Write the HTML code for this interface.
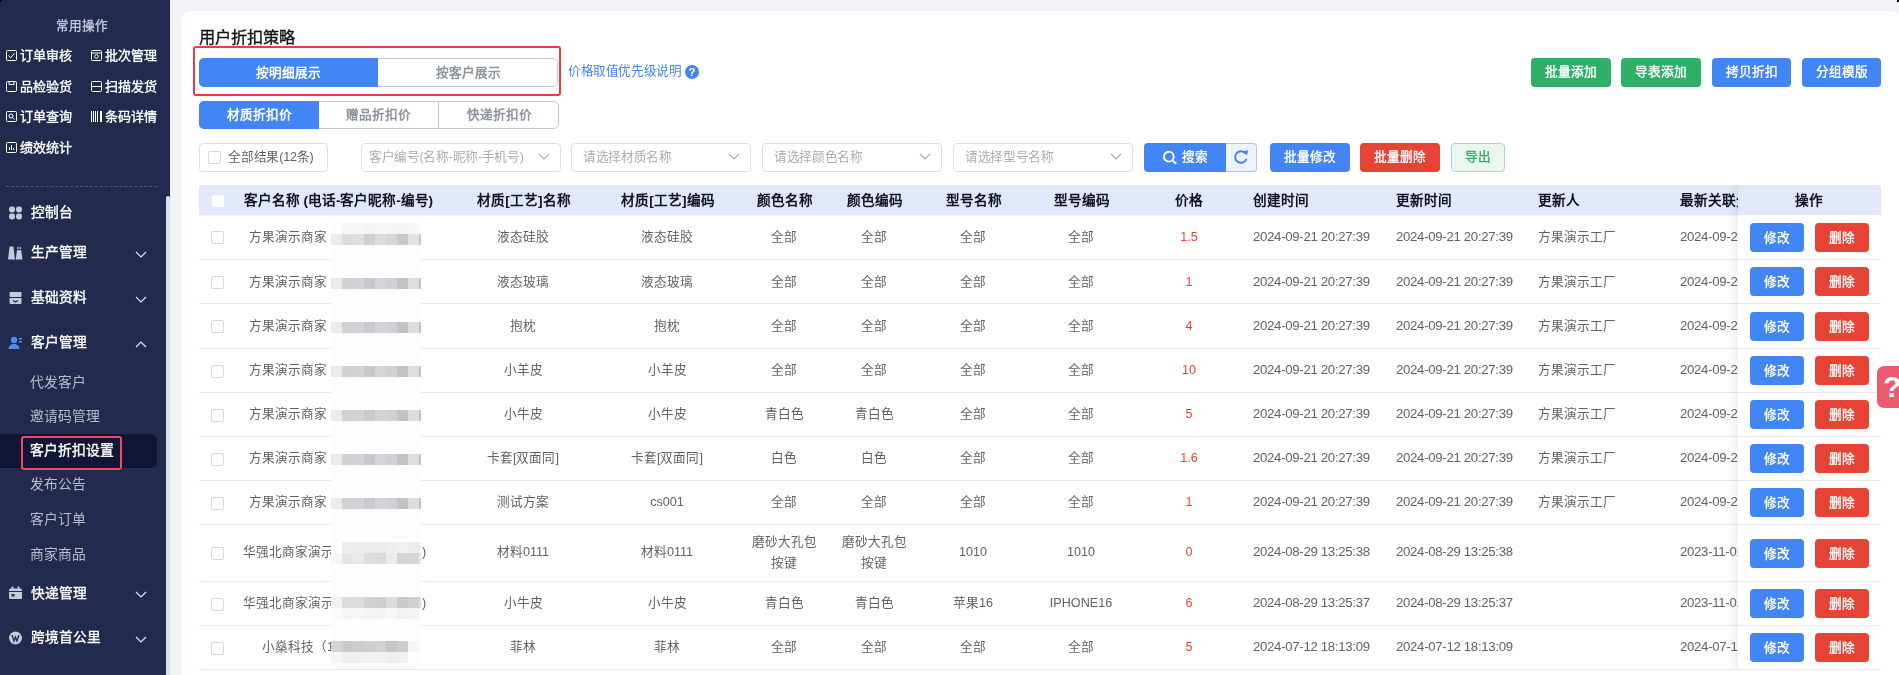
<!DOCTYPE html>
<html lang="zh-CN"><head><meta charset="utf-8"><title>用户折扣策略</title><style>
*{box-sizing:border-box;margin:0;padding:0}
html,body{width:1899px;height:675px;overflow:hidden;background:#f2f3f8}
body{font-family:"Liberation Sans",sans-serif;font-size:12.6px;color:#606266;position:relative}
.a{position:absolute;white-space:nowrap}
.t{position:absolute;white-space:nowrap;line-height:16px;height:16px}
.c{text-align:center}
#root{position:absolute;left:0;top:0;width:1899px;height:675px;overflow:hidden;will-change:transform}
#side{position:absolute;left:0;top:0;width:170px;height:675px;background:#222a4e;overflow:hidden}
#side .t{color:#fff;-webkit-text-stroke-width:.35px}
#card{position:absolute;left:181px;top:11px;width:1720px;height:680px;background:#fff;border-radius:10px}
.btn{position:absolute;height:29px;line-height:29px;text-align:center;color:#fff;border-radius:4px;font-size:12.6px;white-space:nowrap;-webkit-text-stroke-width:.35px}
.blue{background:#4285f4}.green{background:#2fb069}.red{background:#e64335}
.sel{position:absolute;top:143px;height:29px;border:1px solid #dcdfe6;border-radius:4px;background:#fff}
.sel span{position:absolute;top:0;line-height:27px;color:#a9acb3;white-space:nowrap;letter-spacing:-.35px}
.sel svg{position:absolute;right:10px;top:9px}
.cb{position:absolute;width:13px;height:13px;border:1px solid #d5d9e6;border-radius:2px;background:#fff}
.hd{position:absolute;white-space:nowrap;font-weight:bold;font-size:13.6px;letter-spacing:.1px;color:#111226;line-height:16px;top:193px}
.line{position:absolute;left:199px;width:1682px;height:1px;background:#e8eaf3}
.cell{position:absolute;white-space:nowrap;line-height:16px;color:#606266}
.price{color:#ea4335}
.ob{position:absolute;width:54px;height:29px;line-height:30px;border-radius:4px;color:#fff;text-align:center;-webkit-text-stroke-width:.35px}
</style></head><body>
<div id="root">
<div id="side">
<div class="t c" style="left:32px;width:100px;top:18px;color:#c3c8dc">常用操作</div>
<svg class="a" style="left:6px;top:49.5px" width="11" height="11" viewBox="0 0 11 11" fill="none" stroke="#fff" stroke-width="1"><rect x=".5" y=".5" width="10" height="10" rx="1"/><path d="M2.5 5.5 4.8 7.8 8.5 3.2"/></svg>
<div class="t" style="left:20px;top:47.6px;font-size:13px">订单审核</div>
<svg class="a" style="left:91px;top:49.5px" width="11" height="11" viewBox="0 0 11 11" fill="none" stroke="#fff" stroke-width="1"><rect x=".5" y=".5" width="10" height="10" rx="1"/><path d="M.5 3h10"/><circle cx="5.5" cy="6.5" r="1.8"/></svg>
<div class="t" style="left:105px;top:47.6px;font-size:13px">批次管理</div>
<svg class="a" style="left:6px;top:80.5px" width="11" height="11" viewBox="0 0 11 11" fill="none" stroke="#fff" stroke-width="1"><rect x=".5" y=".5" width="10" height="10" rx="1"/><path d="M3 .5v3h5v-3"/></svg>
<div class="t" style="left:20px;top:78.6px;font-size:13px">品检验货</div>
<svg class="a" style="left:91px;top:80.5px" width="11" height="11" viewBox="0 0 11 11" fill="none" stroke="#fff" stroke-width="1"><rect x=".5" y=".5" width="10" height="10" rx="1"/><path d="M.5 5.5h10"/></svg>
<div class="t" style="left:105px;top:78.6px;font-size:13px">扫描发货</div>
<svg class="a" style="left:6px;top:110.5px" width="11" height="11" viewBox="0 0 11 11" fill="none" stroke="#fff" stroke-width="1"><rect x=".5" y=".5" width="10" height="10" rx="1"/><circle cx="5" cy="5" r="2"/><path d="M6.5 6.5 8.5 8.5"/></svg>
<div class="t" style="left:20px;top:108.6px;font-size:13px">订单查询</div>
<svg class="a" style="left:91px;top:110.5px" width="11" height="11" viewBox="0 0 11 11" fill="none" stroke="#fff" stroke-width="1"><g fill="#fff" stroke="none" shape-rendering="crispEdges"><rect x="0" y="0" width="1" height="11"/><rect x="2" y="0" width="1" height="11"/><rect x="4" y="0" width="1" height="11"/><rect x="6" y="0" width="1" height="11"/><rect x="9" y="0" width="2" height="11"/></g></svg>
<div class="t" style="left:105px;top:108.6px;font-size:13px">条码详情</div>
<svg class="a" style="left:6px;top:141.5px" width="11" height="11" viewBox="0 0 11 11" fill="none" stroke="#fff" stroke-width="1"><rect x=".5" y=".5" width="10" height="10" rx="1"/><path d="M3.5 8V5M5.5 8V3M7.5 8V6"/></svg>
<div class="t" style="left:20px;top:139.6px;font-size:13px">绩效统计</div>
<div class="a" style="left:6px;top:186px;width:151px;height:0;border-top:1px dashed #4c557c"></div>
<div class="a" style="left:0;top:434px;width:157px;height:34px;background:#121636;border-radius:0 6px 6px 0"></div>
<div class="a" style="left:21px;top:436px;width:101px;height:34px;border:2px solid #f04b5c;border-radius:3px"></div>
<svg class="a" style="left:8px;top:205.5px" width="15" height="14" viewBox="0 0 15 14"><g fill="#c6cad9"><rect x="1" y="0.5" width="6" height="6" rx="2.4"/><rect x="8" y="0.5" width="6" height="6" rx="2.4"/><rect x="1" y="7.5" width="6" height="6" rx="2.4"/><rect x="8" y="7.5" width="6" height="6" rx="2.4"/></g></svg>
<div class="t" style="left:31px;top:205px;font-size:13.7px">控制台</div>
<svg class="a" style="left:8px;top:245.7px" width="15" height="14" viewBox="0 0 15 14"><g fill="#c6cad9"><path d="M0 13.500 1.600 0.500h3.800L7 13.500z"/><path d="M7.700 13.500 9 4.300h4.200l1.300 9.200z"/><rect x="9.300" y="0.800" width="1.200" height="2.400"/><rect x="11.600" y="0.800" width="1.200" height="2.400"/></g></svg>
<div class="t" style="left:31px;top:245.2px;font-size:13.7px">生产管理</div>
<svg class="a" style="left:135px;top:250.7px" width="12" height="7" viewBox="0 0 12 7" fill="none" stroke="#e4e7f2" stroke-width="1.2"><path d="M1 1 6 6 11 1"/></svg>
<svg class="a" style="left:8px;top:290.9px" width="15" height="14" viewBox="0 0 15 14"><g fill="#c6cad9"><rect x="1.5" y="1" width="12" height="5" rx="1"/><path d="M1.5 7h12v5a1 1 0 0 1-1 1h-10a1 1 0 0 1-1-1z"/></g><path d="M5 9.5 7.5 11 10 9.5" stroke="#222a4e" stroke-width="1.3" fill="none"/></svg>
<div class="t" style="left:31px;top:290.4px;font-size:13.7px">基础资料</div>
<svg class="a" style="left:135px;top:295.9px" width="12" height="7" viewBox="0 0 12 7" fill="none" stroke="#e4e7f2" stroke-width="1.2"><path d="M1 1 6 6 11 1"/></svg>
<svg class="a" style="left:8px;top:335.7px" width="15" height="14" viewBox="0 0 15 14"><g fill="#4d8af5"><circle cx="6" cy="4" r="3.2"/><path d="M0.5 13c0-3.4 2.4-5 5.5-5s5.5 1.6 5.500 5z"/><rect x="11" y="2" width="3" height="1.6"/><rect x="11" y="5" width="3" height="1.6"/></g></svg>
<div class="t" style="left:31px;top:335.2px;font-size:13.7px">客户管理</div>
<svg class="a" style="left:135px;top:340.7px" width="12" height="7" viewBox="0 0 12 7" fill="none" stroke="#e4e7f2" stroke-width="1.2"><path d="M1 6 6 1 11 6"/></svg>
<svg class="a" style="left:8px;top:586px" width="15" height="14" viewBox="0 0 15 14"><g fill="#c6cad9"><rect x="1" y="2.5" width="13" height="10.500" rx="1.5"/><rect x="3.5" y="0.5" width="2" height="3" rx=".6"/><rect x="9.5" y="0.5" width="2" height="3" rx=".6"/></g><rect x="1" y="5" width="13" height="1" fill="#222a4e"/><rect x="3.5" y="8" width="3" height="2.500" fill="#222a4e"/></svg>
<div class="t" style="left:31px;top:585.5px;font-size:13.7px">快递管理</div>
<svg class="a" style="left:135px;top:591px" width="12" height="7" viewBox="0 0 12 7" fill="none" stroke="#e4e7f2" stroke-width="1.2"><path d="M1 1 6 6 11 1"/></svg>
<svg class="a" style="left:8px;top:630.5px" width="15" height="14" viewBox="0 0 15 14"><circle cx="7.5" cy="7" r="6.5" fill="#c6cad9"/><path d="M4 4l2 6 1.500-4 1.500 4 2-6" stroke="#222a4e" stroke-width="1.300" fill="none"/></svg>
<div class="t" style="left:31px;top:630px;font-size:13.7px">跨境首公里</div>
<svg class="a" style="left:135px;top:635.5px" width="12" height="7" viewBox="0 0 12 7" fill="none" stroke="#e4e7f2" stroke-width="1.2"><path d="M1 1 6 6 11 1"/></svg>
<div class="t" style="left:30px;top:375px;font-size:13.8px;color:#b9bdcc;-webkit-text-stroke-width:0">代发客户</div>
<div class="t" style="left:30px;top:409px;font-size:13.8px;color:#b9bdcc;-webkit-text-stroke-width:0">邀请码管理</div>
<div class="t" style="left:30px;top:443.4px;font-size:13.8px;color:#fff;-webkit-text-stroke-width:.35px">客户折扣设置</div>
<div class="t" style="left:30px;top:477.4px;font-size:13.8px;color:#b9bdcc;-webkit-text-stroke-width:0">发布公告</div>
<div class="t" style="left:30px;top:512.1px;font-size:13.8px;color:#b9bdcc;-webkit-text-stroke-width:0">客户订单</div>
<div class="t" style="left:30px;top:546.7px;font-size:13.8px;color:#b9bdcc;-webkit-text-stroke-width:0">商家商品</div>
<div class="a" style="left:166px;top:196px;width:4px;height:490px;background:#dcdfeb;border-radius:2px 2px 0 0"></div>
</div>
<div id="card"></div>
<div class="a" style="left:199px;top:27px;font-size:16.2px;line-height:20px;color:#111;-webkit-text-stroke-width:.35px">用户折扣策略</div>
<div class="a" style="left:193px;top:46px;width:368px;height:50px;border:2px solid #f4364c;border-radius:3px"></div>
<div class="a" style="left:199px;top:58px;width:359px;height:29px;border:1px solid #c6c8cc;border-radius:5px;background:#fff"></div>
<div class="a c" style="left:199px;top:58px;width:179px;height:29px;line-height:31px;background:#4285f4;color:#fff;font-weight:bold;border-radius:5px 0 0 5px">按明细展示</div>
<div class="a c" style="left:378px;top:58px;width:180px;height:29px;line-height:31px;color:#8e93a0;font-weight:bold">按客户展示</div>
<div class="a" style="left:568px;top:63px;line-height:16px;color:#4285f4;letter-spacing:-.4px">价格取值优先级说明</div>
<svg class="a" style="left:685px;top:64.5px" width="14" height="14" viewBox="0 0 13 13"><circle cx="6.5" cy="6.5" r="6.5" fill="#4285f4"/><text x="6.5" y="10.200" font-size="10.500" font-weight="bold" text-anchor="middle" fill="#fff" font-family="Liberation Sans, sans-serif">?</text></svg>
<div class="a" style="left:199px;top:101px;width:360px;height:28px;border:1px solid #c6c8cc;border-radius:5px;background:#fff"></div>
<div class="a c" style="left:199px;top:101px;width:120px;height:28px;line-height:28px;background:#4285f4;color:#fff;font-weight:bold;border-radius:5px 0 0 5px">材质折扣价</div>
<div class="a c" style="left:319px;top:101px;width:120px;height:28px;line-height:26px;color:#8e93a0;font-weight:bold;border-right:1px solid #c6c8cc;border-top:1px solid #c6c8cc;border-bottom:1px solid #c6c8cc">赠品折扣价</div>
<div class="a c" style="left:439px;top:101px;width:120px;height:28px;line-height:28px;color:#8e93a0;font-weight:bold">快递折扣价</div>
<div class="btn green" style="left:1531px;top:58px;width:80px">批量添加</div>
<div class="btn green" style="left:1621px;top:58px;width:80px">导表添加</div>
<div class="btn blue" style="left:1712px;top:58px;width:79px">拷贝折扣</div>
<div class="btn blue" style="left:1802px;top:58px;width:79px">分组模版</div>
<div class="a" style="left:199px;top:143px;width:129px;height:29px;border:1px solid #dcdfe6;border-radius:4px"></div>
<div class="cb" style="left:208px;top:151px"></div>
<div class="a" style="left:228px;top:143px;line-height:28px;color:#606266;letter-spacing:-.2px">全部结果(12条)</div>
<div class="sel" style="left:361px;width:200px"><span style="left:7px">客户编号(名称-昵称-手机号)</span><svg width="12" height="7" viewBox="0 0 12 7" fill="none" stroke="#a8abb2" stroke-width="1.100"><path d="M1 1 6 6 11 1"/></svg></div>
<div class="sel" style="left:571px;width:180px"><span style="left:11px">请选择材质名称</span><svg width="12" height="7" viewBox="0 0 12 7" fill="none" stroke="#a8abb2" stroke-width="1.100"><path d="M1 1 6 6 11 1"/></svg></div>
<div class="sel" style="left:762px;width:180px"><span style="left:11px">请选择颜色名称</span><svg width="12" height="7" viewBox="0 0 12 7" fill="none" stroke="#a8abb2" stroke-width="1.100"><path d="M1 1 6 6 11 1"/></svg></div>
<div class="sel" style="left:953px;width:180px"><span style="left:11px">请选择型号名称</span><svg width="12" height="7" viewBox="0 0 12 7" fill="none" stroke="#a8abb2" stroke-width="1.100"><path d="M1 1 6 6 11 1"/></svg></div>
<div class="btn blue" style="left:1144px;top:143px;width:82px;border-radius:4px 0 0 4px"></div>
<svg class="a" style="left:1162px;top:149.500px" width="16" height="16" viewBox="0 0 16 16" fill="none" stroke="#fff" stroke-width="1.900" stroke-linecap="round"><circle cx="6.800" cy="6.700" r="4.900"/><path d="M10.500 10.400 13.600 13.300"/></svg>
<div class="a" style="left:1182px;top:143px;line-height:29px;color:#fff;-webkit-text-stroke-width:.35px">搜索</div>
<div class="a" style="left:1226px;top:143px;width:31px;height:29px;background:#ecf3fe;border:1px solid #a9c6fa;border-left:none;border-radius:0 4px 4px 0"></div>
<svg class="a" style="left:1232.800px;top:149.100px" width="16" height="16" viewBox="0 0 16 16"><path d="M12.440 4.270A5.800 5.800 0 1 0 13.260 10.450" fill="none" stroke="#4285f4" stroke-width="1.900" stroke-linecap="round"/><path d="M10.300 2.600 14.900 1 14.400 5.900z" fill="#4285f4"/></svg>
<div class="btn blue" style="left:1270px;top:143px;width:80px">批量修改</div>
<div class="btn red" style="left:1360px;top:143px;width:80px">批量删除</div>
<div class="btn" style="left:1451px;top:143px;width:54px;background:#eaf7f0;border:1px solid #a5dbbb;color:#2fb069;line-height:27px">导出</div>
<div class="a" style="left:199px;top:185px;width:1682px;height:30px;background:#e3e8f8;border-radius:4px 4px 0 0"></div>
<div class="a" style="left:199px;top:215px;width:1682px;height:1px;background:#f4f6fc"></div>
<div class="a" style="left:1897px;top:0;width:2px;height:2px;background:#000"></div>
<div class="a" style="left:0;top:0;width:2px;height:2px;background:#000"></div>
<div class="cb" style="left:212px;top:195px;width:12px;height:12px;border-color:#fff"></div>
<div class="hd" style="left:244px;letter-spacing:-.05px">客户名称 (电话-客户昵称-编号)</div>
<div class="hd" style="left:477px">材质[工艺]名称</div>
<div class="hd" style="left:621px">材质[工艺]编码</div>
<div class="hd" style="left:757px">颜色名称</div>
<div class="hd" style="left:847px">颜色编码</div>
<div class="hd" style="left:946px">型号名称</div>
<div class="hd" style="left:1054px">型号编码</div>
<div class="hd" style="left:1175px">价格</div>
<div class="hd" style="left:1253px">创建时间</div>
<div class="hd" style="left:1396px">更新时间</div>
<div class="hd" style="left:1538px">更新人</div>
<div class="hd" style="left:1680px">最新关联分组时间</div>
<div class="line" style="top:259px"></div>
<div class="line" style="top:303px"></div>
<div class="line" style="top:348px"></div>
<div class="line" style="top:392px"></div>
<div class="line" style="top:436px"></div>
<div class="line" style="top:480px"></div>
<div class="line" style="top:524px"></div>
<div class="line" style="top:581px"></div>
<div class="line" style="top:625px"></div>
<div class="line" style="top:669px"></div>
<div class="cb" style="left:211px;top:231px"></div>
<div class="cell" style="left:249px;top:229px">方果演示商家</div>
<div class="cell c" style="left:453px;width:140px;top:229px">液态硅胶</div>
<div class="cell c" style="left:597px;width:140px;top:229px">液态硅胶</div>
<div class="cell c" style="left:714px;width:140px;top:229px">全部</div>
<div class="cell c" style="left:804px;width:140px;top:229px">全部</div>
<div class="cell c" style="left:903px;width:140px;top:229px">全部</div>
<div class="cell c" style="left:1011px;width:140px;top:229px">全部</div>
<div class="cell c price" style="left:1119px;width:140px;top:229px">1.5</div>
<div class="cell" style="left:1253px;top:229px;font-size:13.2px;letter-spacing:-.3px">2024-09-21 20:27:39</div>
<div class="cell" style="left:1396px;top:229px;font-size:13.2px;letter-spacing:-.3px">2024-09-21 20:27:39</div>
<div class="cell" style="left:1538px;top:229px">方果演示工厂</div>
<div class="cell" style="left:1680px;top:229px;font-size:13.2px;letter-spacing:-.3px">2024-09-21</div>
<div class="cb" style="left:211px;top:276px"></div>
<div class="cell" style="left:249px;top:274px">方果演示商家</div>
<div class="cell c" style="left:453px;width:140px;top:274px">液态玻璃</div>
<div class="cell c" style="left:597px;width:140px;top:274px">液态玻璃</div>
<div class="cell c" style="left:714px;width:140px;top:274px">全部</div>
<div class="cell c" style="left:804px;width:140px;top:274px">全部</div>
<div class="cell c" style="left:903px;width:140px;top:274px">全部</div>
<div class="cell c" style="left:1011px;width:140px;top:274px">全部</div>
<div class="cell c price" style="left:1119px;width:140px;top:274px">1</div>
<div class="cell" style="left:1253px;top:274px;font-size:13.2px;letter-spacing:-.3px">2024-09-21 20:27:39</div>
<div class="cell" style="left:1396px;top:274px;font-size:13.2px;letter-spacing:-.3px">2024-09-21 20:27:39</div>
<div class="cell" style="left:1538px;top:274px">方果演示工厂</div>
<div class="cell" style="left:1680px;top:274px;font-size:13.2px;letter-spacing:-.3px">2024-09-21</div>
<div class="cb" style="left:211px;top:320px"></div>
<div class="cell" style="left:249px;top:318px">方果演示商家</div>
<div class="cell c" style="left:453px;width:140px;top:318px">抱枕</div>
<div class="cell c" style="left:597px;width:140px;top:318px">抱枕</div>
<div class="cell c" style="left:714px;width:140px;top:318px">全部</div>
<div class="cell c" style="left:804px;width:140px;top:318px">全部</div>
<div class="cell c" style="left:903px;width:140px;top:318px">全部</div>
<div class="cell c" style="left:1011px;width:140px;top:318px">全部</div>
<div class="cell c price" style="left:1119px;width:140px;top:318px">4</div>
<div class="cell" style="left:1253px;top:318px;font-size:13.2px;letter-spacing:-.3px">2024-09-21 20:27:39</div>
<div class="cell" style="left:1396px;top:318px;font-size:13.2px;letter-spacing:-.3px">2024-09-21 20:27:39</div>
<div class="cell" style="left:1538px;top:318px">方果演示工厂</div>
<div class="cell" style="left:1680px;top:318px;font-size:13.2px;letter-spacing:-.3px">2024-09-21</div>
<div class="cb" style="left:211px;top:365px"></div>
<div class="cell" style="left:249px;top:362px">方果演示商家</div>
<div class="cell c" style="left:453px;width:140px;top:362px">小羊皮</div>
<div class="cell c" style="left:597px;width:140px;top:362px">小羊皮</div>
<div class="cell c" style="left:714px;width:140px;top:362px">全部</div>
<div class="cell c" style="left:804px;width:140px;top:362px">全部</div>
<div class="cell c" style="left:903px;width:140px;top:362px">全部</div>
<div class="cell c" style="left:1011px;width:140px;top:362px">全部</div>
<div class="cell c price" style="left:1119px;width:140px;top:362px">10</div>
<div class="cell" style="left:1253px;top:362px;font-size:13.2px;letter-spacing:-.3px">2024-09-21 20:27:39</div>
<div class="cell" style="left:1396px;top:362px;font-size:13.2px;letter-spacing:-.3px">2024-09-21 20:27:39</div>
<div class="cell" style="left:1538px;top:362px">方果演示工厂</div>
<div class="cell" style="left:1680px;top:362px;font-size:13.2px;letter-spacing:-.3px">2024-09-21</div>
<div class="cb" style="left:211px;top:409px"></div>
<div class="cell" style="left:249px;top:406px">方果演示商家</div>
<div class="cell c" style="left:453px;width:140px;top:406px">小牛皮</div>
<div class="cell c" style="left:597px;width:140px;top:406px">小牛皮</div>
<div class="cell c" style="left:714px;width:140px;top:406px">青白色</div>
<div class="cell c" style="left:804px;width:140px;top:406px">青白色</div>
<div class="cell c" style="left:903px;width:140px;top:406px">全部</div>
<div class="cell c" style="left:1011px;width:140px;top:406px">全部</div>
<div class="cell c price" style="left:1119px;width:140px;top:406px">5</div>
<div class="cell" style="left:1253px;top:406px;font-size:13.2px;letter-spacing:-.3px">2024-09-21 20:27:39</div>
<div class="cell" style="left:1396px;top:406px;font-size:13.2px;letter-spacing:-.3px">2024-09-21 20:27:39</div>
<div class="cell" style="left:1538px;top:406px">方果演示工厂</div>
<div class="cell" style="left:1680px;top:406px;font-size:13.2px;letter-spacing:-.3px">2024-09-21</div>
<div class="cb" style="left:211px;top:453px"></div>
<div class="cell" style="left:249px;top:450px">方果演示商家</div>
<div class="cell c" style="left:453px;width:140px;top:450px">卡套[双面同]</div>
<div class="cell c" style="left:597px;width:140px;top:450px">卡套[双面同]</div>
<div class="cell c" style="left:714px;width:140px;top:450px">白色</div>
<div class="cell c" style="left:804px;width:140px;top:450px">白色</div>
<div class="cell c" style="left:903px;width:140px;top:450px">全部</div>
<div class="cell c" style="left:1011px;width:140px;top:450px">全部</div>
<div class="cell c price" style="left:1119px;width:140px;top:450px">1.6</div>
<div class="cell" style="left:1253px;top:450px;font-size:13.2px;letter-spacing:-.3px">2024-09-21 20:27:39</div>
<div class="cell" style="left:1396px;top:450px;font-size:13.2px;letter-spacing:-.3px">2024-09-21 20:27:39</div>
<div class="cell" style="left:1538px;top:450px">方果演示工厂</div>
<div class="cell" style="left:1680px;top:450px;font-size:13.2px;letter-spacing:-.3px">2024-09-21</div>
<div class="cb" style="left:211px;top:497px"></div>
<div class="cell" style="left:249px;top:494px">方果演示商家</div>
<div class="cell c" style="left:453px;width:140px;top:494px">测试方案</div>
<div class="cell c" style="left:597px;width:140px;top:494px">cs001</div>
<div class="cell c" style="left:714px;width:140px;top:494px">全部</div>
<div class="cell c" style="left:804px;width:140px;top:494px">全部</div>
<div class="cell c" style="left:903px;width:140px;top:494px">全部</div>
<div class="cell c" style="left:1011px;width:140px;top:494px">全部</div>
<div class="cell c price" style="left:1119px;width:140px;top:494px">1</div>
<div class="cell" style="left:1253px;top:494px;font-size:13.2px;letter-spacing:-.3px">2024-09-21 20:27:39</div>
<div class="cell" style="left:1396px;top:494px;font-size:13.2px;letter-spacing:-.3px">2024-09-21 20:27:39</div>
<div class="cell" style="left:1538px;top:494px">方果演示工厂</div>
<div class="cell" style="left:1680px;top:494px;font-size:13.2px;letter-spacing:-.3px">2024-09-21</div>
<div class="cb" style="left:211px;top:547px"></div>
<div class="cell" style="left:243px;top:544px">华强北商家演示</div>
<div class="cell c" style="left:453px;width:140px;top:544px">材料0111</div>
<div class="cell c" style="left:597px;width:140px;top:544px">材料0111</div>
<div class="cell c" style="left:714px;width:140px;top:532px;line-height:20.7px">磨砂大孔包<br>按键</div>
<div class="cell c" style="left:804px;width:140px;top:532px;line-height:20.7px">磨砂大孔包<br>按键</div>
<div class="cell c" style="left:903px;width:140px;top:544px">1010</div>
<div class="cell c" style="left:1011px;width:140px;top:544px">1010</div>
<div class="cell c price" style="left:1119px;width:140px;top:544px">0</div>
<div class="cell" style="left:1253px;top:544px;font-size:13.2px;letter-spacing:-.3px">2024-08-29 13:25:38</div>
<div class="cell" style="left:1396px;top:544px;font-size:13.2px;letter-spacing:-.3px">2024-08-29 13:25:38</div>
<div class="cell" style="left:1680px;top:544px;font-size:13.2px;letter-spacing:-.3px">2023-11-01</div>
<div class="cb" style="left:211px;top:598px"></div>
<div class="cell" style="left:243px;top:595px">华强北商家演示</div>
<div class="cell c" style="left:453px;width:140px;top:595px">小牛皮</div>
<div class="cell c" style="left:597px;width:140px;top:595px">小牛皮</div>
<div class="cell c" style="left:714px;width:140px;top:595px">青白色</div>
<div class="cell c" style="left:804px;width:140px;top:595px">青白色</div>
<div class="cell c" style="left:903px;width:140px;top:595px">苹果16</div>
<div class="cell c" style="left:1011px;width:140px;top:595px">IPHONE16</div>
<div class="cell c price" style="left:1119px;width:140px;top:595px">6</div>
<div class="cell" style="left:1253px;top:595px;font-size:13.2px;letter-spacing:-.3px">2024-08-29 13:25:37</div>
<div class="cell" style="left:1396px;top:595px;font-size:13.2px;letter-spacing:-.3px">2024-08-29 13:25:37</div>
<div class="cell" style="left:1680px;top:595px;font-size:13.2px;letter-spacing:-.3px">2023-11-01</div>
<div class="cb" style="left:211px;top:642px"></div>
<div class="cell" style="left:262px;top:639px">小燊科技（1</div>
<div class="cell c" style="left:453px;width:140px;top:639px">菲林</div>
<div class="cell c" style="left:597px;width:140px;top:639px">菲林</div>
<div class="cell c" style="left:714px;width:140px;top:639px">全部</div>
<div class="cell c" style="left:804px;width:140px;top:639px">全部</div>
<div class="cell c" style="left:903px;width:140px;top:639px">全部</div>
<div class="cell c" style="left:1011px;width:140px;top:639px">全部</div>
<div class="cell c price" style="left:1119px;width:140px;top:639px">5</div>
<div class="cell" style="left:1253px;top:639px;font-size:13.2px;letter-spacing:-.3px">2024-07-12 18:13:09</div>
<div class="cell" style="left:1396px;top:639px;font-size:13.2px;letter-spacing:-.3px">2024-07-12 18:13:09</div>
<div class="cell" style="left:1680px;top:639px;font-size:13.2px;letter-spacing:-.3px">2024-07-12</div>
<div class="a" style="left:331px;top:222px;width:90px;height:443px;background:#fdfdfd"></div>
<div class="a" style="left:342px;top:222.7px;width:11px;height:11px;background:#f6f6f6"></div>
<div class="a" style="left:353px;top:222.7px;width:11px;height:11px;background:#f7f7f7"></div>
<div class="a" style="left:364px;top:222.7px;width:11px;height:11px;background:#f5f5f5"></div>
<div class="a" style="left:375px;top:222.7px;width:11px;height:11px;background:#f7f7f7"></div>
<div class="a" style="left:386px;top:222.7px;width:11px;height:11px;background:#f6f6f6"></div>
<div class="a" style="left:397px;top:222.7px;width:11px;height:11px;background:#f5f5f5"></div>
<div class="a" style="left:408px;top:222.7px;width:11px;height:11px;background:#f7f7f7"></div>
<div class="a" style="left:331px;top:233.7px;width:11px;height:11px;background:#ebebeb"></div>
<div class="a" style="left:342px;top:233.7px;width:11px;height:11px;background:#dcdcde"></div>
<div class="a" style="left:353px;top:233.7px;width:11px;height:11px;background:#dedfe0"></div>
<div class="a" style="left:364px;top:233.7px;width:11px;height:11px;background:#cfd0d3"></div>
<div class="a" style="left:375px;top:233.7px;width:11px;height:11px;background:#dcdddf"></div>
<div class="a" style="left:386px;top:233.7px;width:11px;height:11px;background:#d6d7d9"></div>
<div class="a" style="left:397px;top:233.7px;width:11px;height:11px;background:#c8c9cc"></div>
<div class="a" style="left:408px;top:233.7px;width:11px;height:11px;background:#e2e2e3"></div>
<div class="a" style="left:419px;top:233.7px;width:2px;height:11px;background:#c8c8ca"></div>
<div class="a" style="left:331px;top:277.7px;width:11px;height:11px;background:#ebebeb"></div>
<div class="a" style="left:342px;top:277.7px;width:11px;height:11px;background:#d0d1d4"></div>
<div class="a" style="left:353px;top:277.7px;width:11px;height:11px;background:#d2d3d6"></div>
<div class="a" style="left:364px;top:277.7px;width:11px;height:11px;background:#c8c9cc"></div>
<div class="a" style="left:375px;top:277.7px;width:11px;height:11px;background:#d4d5d8"></div>
<div class="a" style="left:386px;top:277.7px;width:11px;height:11px;background:#d0d1d4"></div>
<div class="a" style="left:397px;top:277.7px;width:11px;height:11px;background:#c2c3c6"></div>
<div class="a" style="left:408px;top:277.7px;width:11px;height:11px;background:#dedede"></div>
<div class="a" style="left:419px;top:277.7px;width:2px;height:11px;background:#c4c4c6"></div>
<div class="a" style="left:331px;top:321.7px;width:11px;height:11px;background:#ebebeb"></div>
<div class="a" style="left:342px;top:321.7px;width:11px;height:11px;background:#d0d1d4"></div>
<div class="a" style="left:353px;top:321.7px;width:11px;height:11px;background:#d2d3d6"></div>
<div class="a" style="left:364px;top:321.7px;width:11px;height:11px;background:#c8c9cc"></div>
<div class="a" style="left:375px;top:321.7px;width:11px;height:11px;background:#d4d5d8"></div>
<div class="a" style="left:386px;top:321.7px;width:11px;height:11px;background:#d0d1d4"></div>
<div class="a" style="left:397px;top:321.7px;width:11px;height:11px;background:#c2c3c6"></div>
<div class="a" style="left:408px;top:321.7px;width:11px;height:11px;background:#dedede"></div>
<div class="a" style="left:419px;top:321.7px;width:2px;height:11px;background:#c4c4c6"></div>
<div class="a" style="left:331px;top:365.7px;width:11px;height:11px;background:#ebebeb"></div>
<div class="a" style="left:342px;top:365.7px;width:11px;height:11px;background:#d0d1d4"></div>
<div class="a" style="left:353px;top:365.7px;width:11px;height:11px;background:#d2d3d6"></div>
<div class="a" style="left:364px;top:365.7px;width:11px;height:11px;background:#c8c9cc"></div>
<div class="a" style="left:375px;top:365.7px;width:11px;height:11px;background:#d4d5d8"></div>
<div class="a" style="left:386px;top:365.7px;width:11px;height:11px;background:#d0d1d4"></div>
<div class="a" style="left:397px;top:365.7px;width:11px;height:11px;background:#c2c3c6"></div>
<div class="a" style="left:408px;top:365.7px;width:11px;height:11px;background:#dedede"></div>
<div class="a" style="left:419px;top:365.7px;width:2px;height:11px;background:#c4c4c6"></div>
<div class="a" style="left:331px;top:409.7px;width:11px;height:11px;background:#ebebeb"></div>
<div class="a" style="left:342px;top:409.7px;width:11px;height:11px;background:#d0d1d4"></div>
<div class="a" style="left:353px;top:409.7px;width:11px;height:11px;background:#d2d3d6"></div>
<div class="a" style="left:364px;top:409.7px;width:11px;height:11px;background:#c8c9cc"></div>
<div class="a" style="left:375px;top:409.7px;width:11px;height:11px;background:#d4d5d8"></div>
<div class="a" style="left:386px;top:409.7px;width:11px;height:11px;background:#d0d1d4"></div>
<div class="a" style="left:397px;top:409.7px;width:11px;height:11px;background:#c2c3c6"></div>
<div class="a" style="left:408px;top:409.7px;width:11px;height:11px;background:#dedede"></div>
<div class="a" style="left:419px;top:409.7px;width:2px;height:11px;background:#c4c4c6"></div>
<div class="a" style="left:331px;top:453.7px;width:11px;height:11px;background:#ebebeb"></div>
<div class="a" style="left:342px;top:453.7px;width:11px;height:11px;background:#d0d1d4"></div>
<div class="a" style="left:353px;top:453.7px;width:11px;height:11px;background:#d2d3d6"></div>
<div class="a" style="left:364px;top:453.7px;width:11px;height:11px;background:#c8c9cc"></div>
<div class="a" style="left:375px;top:453.7px;width:11px;height:11px;background:#d4d5d8"></div>
<div class="a" style="left:386px;top:453.7px;width:11px;height:11px;background:#d0d1d4"></div>
<div class="a" style="left:397px;top:453.7px;width:11px;height:11px;background:#c2c3c6"></div>
<div class="a" style="left:408px;top:453.7px;width:11px;height:11px;background:#dedede"></div>
<div class="a" style="left:419px;top:453.7px;width:2px;height:11px;background:#c4c4c6"></div>
<div class="a" style="left:331px;top:497.7px;width:11px;height:11px;background:#ebebeb"></div>
<div class="a" style="left:342px;top:497.7px;width:11px;height:11px;background:#d0d1d4"></div>
<div class="a" style="left:353px;top:497.7px;width:11px;height:11px;background:#d2d3d6"></div>
<div class="a" style="left:364px;top:497.7px;width:11px;height:11px;background:#c8c9cc"></div>
<div class="a" style="left:375px;top:497.7px;width:11px;height:11px;background:#d4d5d8"></div>
<div class="a" style="left:386px;top:497.7px;width:11px;height:11px;background:#d0d1d4"></div>
<div class="a" style="left:397px;top:497.7px;width:11px;height:11px;background:#c2c3c6"></div>
<div class="a" style="left:408px;top:497.7px;width:11px;height:11px;background:#dedede"></div>
<div class="a" style="left:419px;top:497.7px;width:2px;height:11px;background:#c4c4c6"></div>
<div class="a" style="left:342px;top:541.7px;width:11px;height:11px;background:#eeeeef"></div>
<div class="a" style="left:353px;top:541.7px;width:11px;height:11px;background:#ececed"></div>
<div class="a" style="left:364px;top:541.7px;width:11px;height:11px;background:#ededee"></div>
<div class="a" style="left:375px;top:541.7px;width:11px;height:11px;background:#ebebec"></div>
<div class="a" style="left:386px;top:541.7px;width:11px;height:11px;background:#eeeeee"></div>
<div class="a" style="left:397px;top:541.7px;width:11px;height:11px;background:#f0f0f0"></div>
<div class="a" style="left:408px;top:541.7px;width:11px;height:11px;background:#ececed"></div>
<div class="a" style="left:419px;top:541.7px;width:2px;height:11px;background:#f4f4f4"></div>
<div class="a" style="left:331px;top:552.7px;width:11px;height:11px;background:#f6f6f6"></div>
<div class="a" style="left:342px;top:552.7px;width:11px;height:11px;background:#e6e6e7"></div>
<div class="a" style="left:353px;top:552.7px;width:11px;height:11px;background:#e9e9ea"></div>
<div class="a" style="left:364px;top:552.7px;width:11px;height:11px;background:#dededf"></div>
<div class="a" style="left:375px;top:552.7px;width:11px;height:11px;background:#dadadc"></div>
<div class="a" style="left:386px;top:552.7px;width:11px;height:11px;background:#ececec"></div>
<div class="a" style="left:397px;top:552.7px;width:11px;height:11px;background:#d2d3d5"></div>
<div class="a" style="left:408px;top:552.7px;width:11px;height:11px;background:#d8d8da"></div>
<div class="a" style="left:419px;top:552.7px;width:2px;height:11px;background:#e8e8e8"></div>
<div class="a" style="left:331px;top:596.7px;width:11px;height:11px;background:#f2f2f2"></div>
<div class="a" style="left:342px;top:596.7px;width:11px;height:11px;background:#dcdcde"></div>
<div class="a" style="left:353px;top:596.7px;width:11px;height:11px;background:#dddddf"></div>
<div class="a" style="left:364px;top:596.7px;width:11px;height:11px;background:#d2d2d5"></div>
<div class="a" style="left:375px;top:596.7px;width:11px;height:11px;background:#cfcfd2"></div>
<div class="a" style="left:386px;top:596.7px;width:11px;height:11px;background:#dcdcde"></div>
<div class="a" style="left:397px;top:596.7px;width:11px;height:11px;background:#cbcbce"></div>
<div class="a" style="left:408px;top:596.7px;width:11px;height:11px;background:#d0d0d3"></div>
<div class="a" style="left:419px;top:596.7px;width:2px;height:11px;background:#dcdcdc"></div>
<div class="a" style="left:331px;top:607.7px;width:11px;height:11px;background:#fbfbfb"></div>
<div class="a" style="left:342px;top:607.7px;width:11px;height:11px;background:#f6f6f6"></div>
<div class="a" style="left:353px;top:607.7px;width:11px;height:11px;background:#f7f7f7"></div>
<div class="a" style="left:364px;top:607.7px;width:11px;height:11px;background:#f4f4f5"></div>
<div class="a" style="left:375px;top:607.7px;width:11px;height:11px;background:#f3f3f4"></div>
<div class="a" style="left:386px;top:607.7px;width:11px;height:11px;background:#f8f8f8"></div>
<div class="a" style="left:397px;top:607.7px;width:11px;height:11px;background:#f2f2f3"></div>
<div class="a" style="left:408px;top:607.7px;width:11px;height:11px;background:#f4f4f5"></div>
<div class="a" style="left:331px;top:640.7px;width:11px;height:11px;background:#d4d4d6"></div>
<div class="a" style="left:342px;top:640.7px;width:11px;height:11px;background:#c9c9cc"></div>
<div class="a" style="left:353px;top:640.7px;width:11px;height:11px;background:#cdcdd0"></div>
<div class="a" style="left:364px;top:640.7px;width:11px;height:11px;background:#cfcfd2"></div>
<div class="a" style="left:375px;top:640.7px;width:11px;height:11px;background:#d2d2d4"></div>
<div class="a" style="left:386px;top:640.7px;width:11px;height:11px;background:#c6c6c9"></div>
<div class="a" style="left:397px;top:640.7px;width:11px;height:11px;background:#cdcdcf"></div>
<div class="a" style="left:408px;top:640.7px;width:11px;height:11px;background:#f6f6f6"></div>
<div class="a" style="left:331px;top:651.7px;width:11px;height:11px;background:#f4f4f4"></div>
<div class="a" style="left:342px;top:651.7px;width:11px;height:11px;background:#efeff0"></div>
<div class="a" style="left:353px;top:651.7px;width:11px;height:11px;background:#f0f0f1"></div>
<div class="a" style="left:364px;top:651.7px;width:11px;height:11px;background:#f1f1f2"></div>
<div class="a" style="left:375px;top:651.7px;width:11px;height:11px;background:#f1f1f1"></div>
<div class="a" style="left:386px;top:651.7px;width:11px;height:11px;background:#eeeeef"></div>
<div class="a" style="left:397px;top:651.7px;width:11px;height:11px;background:#f0f0f0"></div>
<div class="cell" style="left:422px;top:544px">)</div>
<div class="cell" style="left:422px;top:595px">)</div>
<div class="a" style="left:1728px;top:185px;width:10px;height:484px;background:linear-gradient(to right,rgba(0,0,0,0),rgba(0,0,0,.055))"></div>
<div class="a" style="left:1738px;top:215px;width:143px;height:455px;background:#fff"></div>
<div class="a" style="left:1738px;top:185px;width:143px;height:30px;background:#e3e8f8;border-radius:0 4px 0 0"></div>
<div class="hd c" style="left:1738px;width:143px">操作</div>
<div class="line" style="left:1738px;width:143px;top:259px"></div>
<div class="ob blue" style="left:1750px;top:223px">修改</div>
<div class="ob red" style="left:1815px;top:223px">删除</div>
<div class="line" style="left:1738px;width:143px;top:303px"></div>
<div class="ob blue" style="left:1750px;top:267px">修改</div>
<div class="ob red" style="left:1815px;top:267px">删除</div>
<div class="line" style="left:1738px;width:143px;top:348px"></div>
<div class="ob blue" style="left:1750px;top:312px">修改</div>
<div class="ob red" style="left:1815px;top:312px">删除</div>
<div class="line" style="left:1738px;width:143px;top:392px"></div>
<div class="ob blue" style="left:1750px;top:356px">修改</div>
<div class="ob red" style="left:1815px;top:356px">删除</div>
<div class="line" style="left:1738px;width:143px;top:436px"></div>
<div class="ob blue" style="left:1750px;top:400px">修改</div>
<div class="ob red" style="left:1815px;top:400px">删除</div>
<div class="line" style="left:1738px;width:143px;top:480px"></div>
<div class="ob blue" style="left:1750px;top:444px">修改</div>
<div class="ob red" style="left:1815px;top:444px">删除</div>
<div class="line" style="left:1738px;width:143px;top:524px"></div>
<div class="ob blue" style="left:1750px;top:488px">修改</div>
<div class="ob red" style="left:1815px;top:488px">删除</div>
<div class="line" style="left:1738px;width:143px;top:581px"></div>
<div class="ob blue" style="left:1750px;top:539px">修改</div>
<div class="ob red" style="left:1815px;top:539px">删除</div>
<div class="line" style="left:1738px;width:143px;top:625px"></div>
<div class="ob blue" style="left:1750px;top:589px">修改</div>
<div class="ob red" style="left:1815px;top:589px">删除</div>
<div class="line" style="left:1738px;width:143px;top:669px"></div>
<div class="ob blue" style="left:1750px;top:633px">修改</div>
<div class="ob red" style="left:1815px;top:633px">删除</div>
<div class="a" style="left:1877px;top:366px;width:30px;height:42px;background:#ee5a6f;border-radius:7px"></div>
<div class="a" style="left:1883px;top:370px;font-size:30px;line-height:34px;font-weight:bold;color:#fff">?</div>
</div>
</body></html>
